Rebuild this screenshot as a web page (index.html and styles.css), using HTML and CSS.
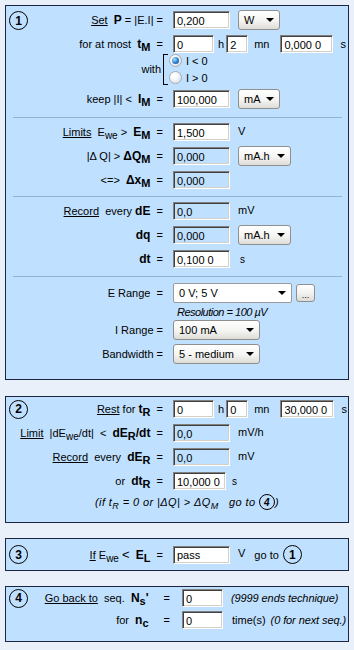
FILE: index.html
```html
<!DOCTYPE html>
<html lang="en">
<head>
    <meta charset="UTF-8">
    <title>Sequence</title>
    <link rel="stylesheet" href="styles.css">
</head>
<body>

<div class="panel p1">
    <div class="row">
        <div class="lbl"><span class="num top">1</span><span class="t"><u>Set</u>&nbsp; <b>P</b> = |E.I| =</span></div>
        <input class="in w57" value="0,200">
        <div class="sel w42">W</div>
    </div>
    <div class="row">
        <div class="lbl"><span class="t">for at most&nbsp; <b>t<sub>M</sub></b>&nbsp; =</span></div>
        <input class="in w41" value="0">
        <span class="u-h">h</span>
        <input class="in w22" value="2">
        <span class="u-mn">mn</span>
        <input class="in w53" value="0,000 0">
        <span class="u-s">s</span>
    </div>
    <div class="radios">
        <div class="lbl short"><span class="t">with</span></div>
        <span class="bracket"></span>
        <div class="opts">
            <div class="opt"><span class="radio on"></span>I &lt; 0</div>
            <div class="opt"><span class="radio"></span>I &gt; 0</div>
        </div>
    </div>
    <div class="row keep">
        <div class="lbl"><span class="t">keep |I| &lt;&nbsp; <b>I<sub>M</sub></b>&nbsp; =</span></div>
        <input class="in w57" value="100,000">
        <div class="sel w42">mA</div>
    </div>

    <div class="sep"></div>

    <div class="row">
        <div class="lbl"><span class="t"><u>Limits</u>&nbsp; E<sub>we</sub>&nbsp;&gt;&nbsp; <b>E<sub>M</sub></b>&nbsp; =</span></div>
        <input class="in w57" value="1,500">
        <span class="unit">V</span>
    </div>
    <div class="row">
        <div class="lbl"><span class="t">|&#916; Q| &gt; <b>&#916;Q<sub>M</sub></b>&nbsp; =</span></div>
        <input class="in w57 off" value="0,000">
        <div class="sel w53">mA.h</div>
    </div>
    <div class="row">
        <div class="lbl"><span class="t">&lt;=&gt;&nbsp; <b>&#916;x<sub>M</sub></b>&nbsp; =</span></div>
        <input class="in w57 off" value="0,000">
    </div>

    <div class="sep s2"></div>

    <div class="row">
        <div class="lbl"><span class="t"><u>Record</u>&nbsp; every <b>dE</b>&nbsp; =</span></div>
        <input class="in w57 off" value="0,0">
        <span class="unit">mV</span>
    </div>
    <div class="row">
        <div class="lbl"><span class="t"><b>dq</b>&nbsp; =</span></div>
        <input class="in w57 off" value="0,000">
        <div class="sel w53">mA.h</div>
    </div>
    <div class="row">
        <div class="lbl"><span class="t"><b>dt</b>&nbsp; =</span></div>
        <input class="in w57" value="0,100 0">
        <span class="unit sec">s</span>
    </div>

    <div class="sep s3"></div>

    <div class="row">
        <div class="lbl"><span class="t">E Range&nbsp; =</span></div>
        <div class="sel combo w119">0 V; 5 V</div>
        <span class="dots">...</span>
    </div>
    <div class="res"><span class="t">Resolution = 100 &micro;V</span></div>
    <div class="row">
        <div class="lbl"><span class="t">I Range =</span></div>
        <div class="sel w87">100 mA</div>
    </div>
    <div class="row">
        <div class="lbl"><span class="t">Bandwidth =</span></div>
        <div class="sel w87">5 - medium</div>
    </div>
</div>

<div class="panel p2">
    <div class="row">
        <div class="lbl"><span class="num">2</span><span class="t"><u>Rest</u> for <b>t<sub>R</sub></b>&nbsp; =</span></div>
        <input class="in w41" value="0">
        <span class="u-h">h</span>
        <input class="in w22" value="0">
        <span class="u-mn">mn</span>
        <input class="in w54" value="30,000 0">
        <span class="u-s">s</span>
    </div>
    <div class="row">
        <div class="lbl"><span class="t"><u>Limit</u>&nbsp; |dE<sub>we</sub>/dt|&nbsp; &lt;&nbsp; <b>dE<sub>R</sub>/dt</b>&nbsp; =</span></div>
        <input class="in w57 off" value="0,0">
        <span class="unit">mV/h</span>
    </div>
    <div class="row">
        <div class="lbl"><span class="t"><u>Record</u>&nbsp; every&nbsp; <b>dE<sub>R</sub></b>&nbsp; =</span></div>
        <input class="in w57 off" value="0,0">
        <span class="unit">mV</span>
    </div>
    <div class="row">
        <div class="lbl"><span class="t">or&nbsp; <b>dt<sub>R</sub></b>&nbsp; =</span></div>
        <input class="in w53" value="10,000 0">
        <span class="unit sec narrow">s</span>
    </div>
    <div class="note"><span class="t">(if t<sub>R</sub> = 0 or |&#916;Q| &gt; &#916;Q<sub>M</sub>&nbsp;&nbsp; go to&nbsp;</span><span class="num small">4</span><span class="t">)</span></div>
</div>

<div class="panel p3">
    <div class="row tall">
        <div class="lbl"><span class="num">3</span><span class="t"><u>If</u> E<sub>we</sub>&nbsp;<span class="lt">&lt;</span>&nbsp; <b>E<sub>L</sub></b>&nbsp; =</span></div>
        <input class="in w57" value="pass">
        <span class="unit">V</span>
        <span class="goto">go to</span>
        <span class="num">1</span>
    </div>
</div>

<div class="panel p4">
    <div class="row short">
        <div class="lbl wide"><span class="num">4</span><span class="t"><u>Go back to</u>&nbsp; seq.&nbsp; <b>N<sub>s</sub>'</b></span><span class="eq">=</span></div>
        <input class="in w41" value="0">
        <span class="hint">(9999 ends technique)</span>
    </div>
    <div class="row short">
        <div class="lbl wide"><span class="t">for&nbsp; <b>n<sub>c</sub></b></span><span class="eq">=</span></div>
        <input class="in w41" value="0">
        <span class="times">time(s)</span>
        <span class="hint">(0 for next seq.)</span>
    </div>
</div>

</body>
</html>
```

FILE: styles.css
```css
body {
    margin: 5px;
    background: #eaf0fa;
    font-family: "Liberation Sans Narrow", "Arial Narrow", "Liberation Sans", sans-serif;
    font-size: 11px;
    color: #000;
}

.panel {
    background: #c0e0ff;
    border: 1px solid #1b2440;
}

.p1 {
    padding: 2px 0 13px;
    margin-bottom: 16px;
}

.p2 {
    padding: 0 0 11px;
    margin-bottom: 15px;
}

.p3 {
    margin-bottom: 15px;
}

.p4 {
    padding-bottom: 10px;
}

.row {
    display: flex;
    align-items: center;
    height: 24px;
    white-space: nowrap;
}

.row.keep {
    margin-top: 1px;
}

.row.tall {
    height: 31px;
}

.row.short {
    height: 22px;
}

.lbl {
    width: 157px;
    margin-right: 10px;
    flex-shrink: 0;
    display: flex;
    align-items: center;
    justify-content: flex-end;
    white-space: nowrap;
}

.lbl.wide {
    width: 164px;
    margin-right: 12px;
}

.lbl .num {
    margin-left: 3px;
    margin-right: auto;
}

.t {
    white-space: nowrap;
}

b {
    font-family: "Liberation Sans", Arial, sans-serif;
    font-weight: bold;
    font-size: 12px;
}

sub {
    font-size: 10px;
    vertical-align: -3px;
    line-height: 0;
}

b sub {
    font-size: 11px;
}

.num {
    box-sizing: border-box;
    width: 19px;
    height: 19px;
    flex-shrink: 0;
    border: 1.5px solid #000;
    border-radius: 50%;
    display: inline-flex;
    align-items: center;
    justify-content: center;
    font-family: "Liberation Sans", Arial, sans-serif;
    font-weight: bold;
    font-size: 12px;
}

.num.top {
    align-self: flex-start;
    margin-top: 1px;
}

.num.small {
    width: 16px;
    height: 16px;
    font-size: 10px;
    font-style: italic;
    letter-spacing: 0;
}

/* inputs */
.in {
    box-sizing: border-box;
    height: 18px;
    flex-shrink: 0;
    padding: 1px 3px 0;
    border: 1px solid;
    border-color: #808080 #fff #fff #808080;
    box-shadow: inset 1px 1px 0 #404040, inset -1px -1px 0 #d4d0c8;
    background: #fff;
    font: inherit;
    color: #000;
    outline: none;
}

.in.off {
    background: #c0e0ff;
}

.w22 { width: 22px; }
.w41 { width: 41px; }
.w42 { width: 42px; }
.w53 { width: 53px; }
.w54 { width: 54px; }
.w57 { width: 57px; }
.w87 { width: 87px; }
.w119 { width: 119px; }

.u-h {
    margin: 0 2px 0 4px;
}

.u-mn {
    margin: 0 11px 0 6px;
}

.u-s {
    margin-left: 7px;
}

.unit {
    margin-left: 8px;
    margin-bottom: 3px;
}

.unit.sec {
    margin-left: 10px;
    margin-bottom: 0;
    font-size: 10px;
}

.unit.narrow {
    margin-left: 6px;
}

/* drop-down lists */
.sel {
    box-sizing: border-box;
    height: 20px;
    flex-shrink: 0;
    margin-left: 8px;
    padding: 0 5px 0 5px;
    display: flex;
    align-items: center;
    justify-content: space-between;
    border: 1px solid #8e8f8f;
    border-radius: 3px;
    background: linear-gradient(#ffffff, #f4f4f2 55%, #dedcd6);
}

.lbl + .sel {
    margin-left: 0;
}

.sel::after {
    content: "";
    border-left: 4px solid transparent;
    border-right: 4px solid transparent;
    border-top: 4px solid #000;
}

.sel.combo {
    background: #fff;
    border-color: #9a9a9a;
    border-radius: 2px;
}

.dots {
    box-sizing: border-box;
    width: 19px;
    height: 18px;
    margin-left: 4px;
    border: 1px solid #8e8f8f;
    border-radius: 3px;
    background: linear-gradient(#ffffff, #f0f0ee 55%, #dcdad4);
    display: flex;
    align-items: center;
    justify-content: center;
    font-size: 9px;
    padding-top: 3px;
}

/* radio group */
.radios {
    display: flex;
    align-items: center;
    margin-top: -4px;
}

.lbl.short {
    width: 155px;
    margin-right: 2px;
}

.bracket {
    box-sizing: border-box;
    width: 5px;
    height: 31px;
    border: 1px solid #000;
    border-right: 0;
    margin-right: 1px;
}

.opt {
    height: 17px;
    display: flex;
    align-items: center;
    gap: 4px;
}

.radio {
    box-sizing: border-box;
    width: 13px;
    height: 13px;
    border-radius: 50%;
    border: 1px solid #a5acb5;
    background: radial-gradient(circle at 35% 35%, #ffffff 20%, #d3d7de);
    display: flex;
    align-items: center;
    justify-content: center;
}

.radio.on::after {
    content: "";
    width: 7px;
    height: 7px;
    border-radius: 50%;
    background: radial-gradient(circle at 35% 35%, #a6e0ff, #2a7fd0 55%, #0d3f86);
}

/* separators and notes */
.sep {
    border-top: 1px solid #93b3d3;
    margin: 6px 6px 2px 7px;
}

.sep.s2 {
    margin-top: 4px;
}

.sep.s3 {
    margin-top: 5px;
    margin-bottom: 4px;
}

.res {
    height: 13px;
    padding-left: 171px;
    display: flex;
    align-items: center;
    font-style: italic;
    letter-spacing: -0.5px;
}

.note {
    height: 18px;
    padding-left: 89px;
    display: flex;
    align-items: center;
    font-style: italic;
    white-space: nowrap;
    letter-spacing: 0.4px;
}

.note sub {
    font-size: 9px;
}

.lt {
    font-size: 13px;
}

.goto {
    margin: 0 4px 0 9px;
}

.eq {
    margin-left: 15px;
}

.hint {
    margin-left: 8px;
    font-style: italic;
    letter-spacing: -0.1px;
}

.times {
    margin-left: 9px;
}

.times + .hint {
    margin-left: 5px;
}
```
